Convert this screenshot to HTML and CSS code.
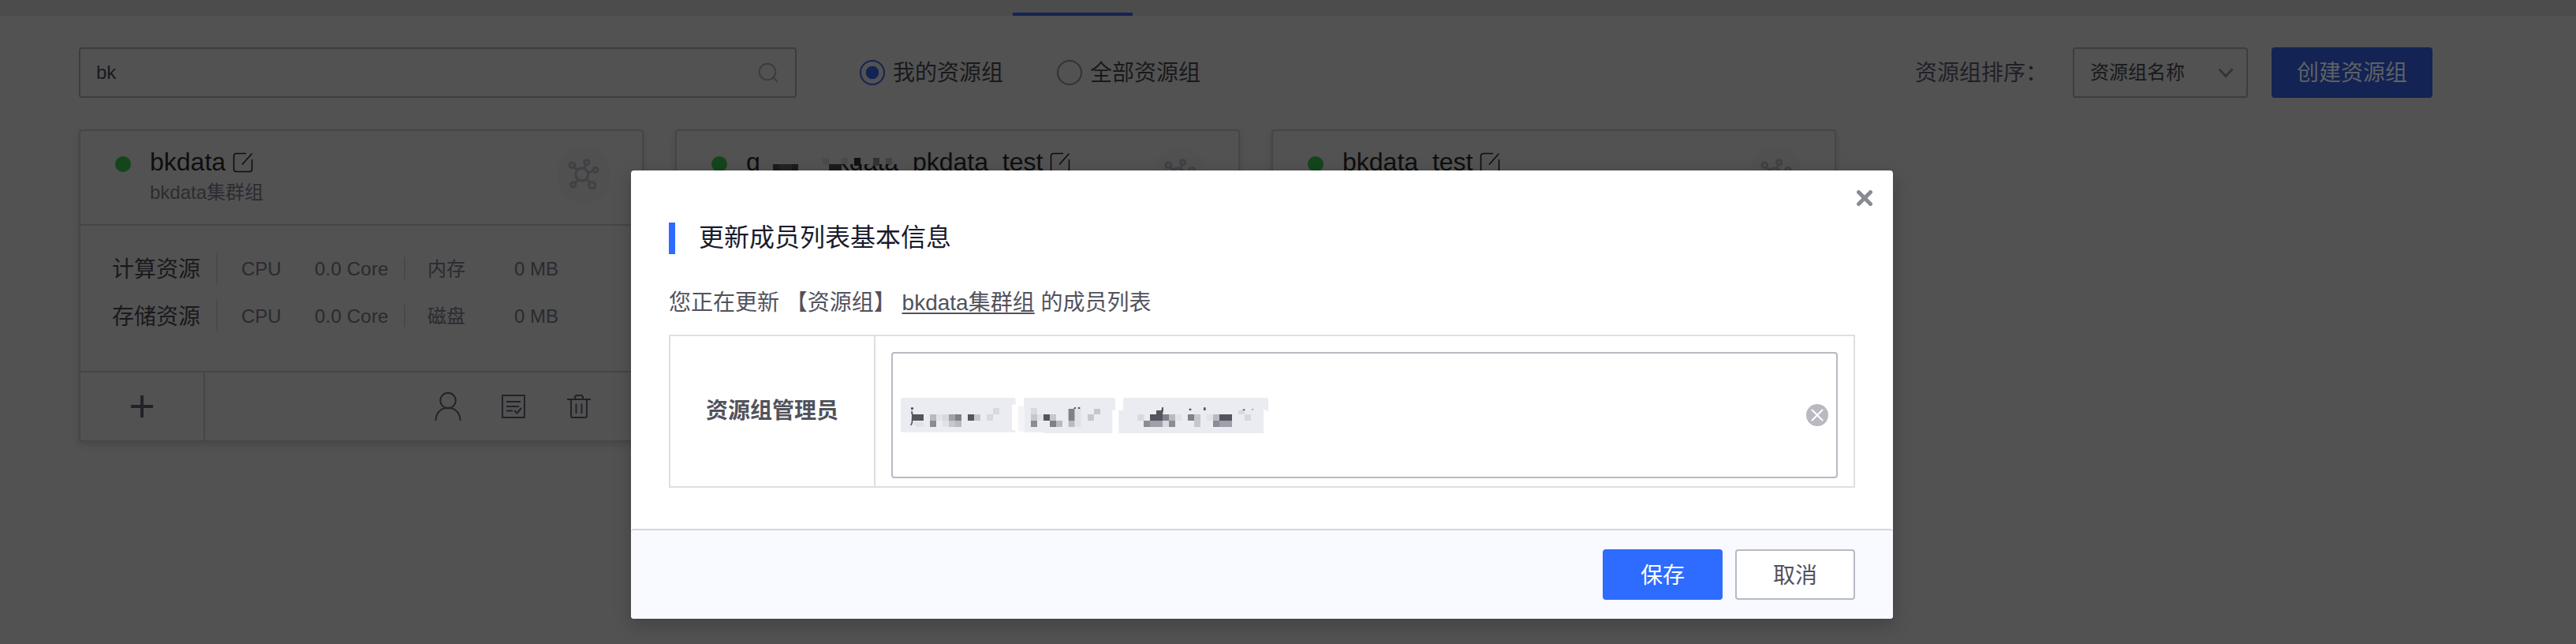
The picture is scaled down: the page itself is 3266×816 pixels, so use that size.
FILE: index.html
```html
<!DOCTYPE html>
<html lang="zh-CN">
<head>
<meta charset="utf-8">
<title>资源组</title>
<link rel="stylesheet" href="styles.css">
</head>
<body>
<svg class="defs" width="0" height="0">
  <symbol id="edit" viewBox="0 0 26 26"><path d="M17 1.5H4.500a3 3 0 0 0-3 3v17a3 3 0 0 0 3 3h17a3 3 0 0 0 3-3V9M24.500 1.500 12 15.500" fill="none" stroke="currentColor" stroke-width="1.600"/></symbol>
  <symbol id="net" viewBox="0 0 68 72"><ellipse cx="34" cy="36" rx="34" ry="36" fill="#505050"/><g fill="none" stroke="#414145" stroke-width="3"><circle cx="31.700" cy="35" r="8"/><circle cx="19.300" cy="23.300" r="3.300"/><circle cx="37.700" cy="19.700" r="3"/><circle cx="49" cy="29.300" r="3"/><circle cx="44.700" cy="48.700" r="4"/><circle cx="20.700" cy="48" r="3"/><path d="m22 26 4 3.500M36.500 23l-2 4.500M46 30.500l-7 2.500M42 45.500 37 41M23 46l4-4.500"/></g></symbol>
</svg>
<div class="topbar"><div class="tab-line"></div></div>
<div class="toolbar">
  <div class="search"><span>bk</span>
    <svg width="26" height="26" viewBox="0 0 26 26" fill="none" stroke="#3d3d40" stroke-width="2"><circle cx="12" cy="12" r="10.300"/><path d="m19.500 19 5 5.500"/></svg>
  </div>
  <label class="radio on"><i></i><span>我的资源组</span></label>
  <label class="radio"><i></i><span>全部资源组</span></label>
  <div class="sort"><span>资源组排序</span><span class="colon">：</span></div>
  <div class="select"><span>资源组名称</span>
    <svg width="20" height="13" viewBox="0 0 20 13" fill="none" stroke="#323236" stroke-width="2.600"><path d="m1.500 1.500 8.500 9 8.500-9"/></svg>
  </div>
  <div class="create">创建资源组</div>
</div>
<div class="cards">
  <div class="card">
    <div class="head"><i class="dot"></i>
      <div class="names"><div class="title"><span class="name">bkdata</span><svg class="edit"><use href="#edit"/></svg></div><div class="sub">bkdata集群组</div></div>
      <svg class="net"><use href="#net"/></svg></div>
    <div class="body">
      <div class="row"><b>计算资源</b><span class="k">CPU</span><span class="v">0.0 Core</span><span class="m">内存</span><span class="z">0 MB</span></div>
      <div class="row"><b>存储资源</b><span class="k">CPU</span><span class="v">0.0 Core</span><span class="m">磁盘</span><span class="z">0 MB</span></div>
    </div>
    <div class="foot">
      <div class="add"><svg width="28" height="28" viewBox="0 0 28 28" stroke="#22222a" stroke-width="4"><path d="M14 0v28M0 14h28"/></svg></div>
      <div class="ops">
        <svg width="34" height="38" viewBox="0 0 34 38" fill="none" stroke="#22222a" stroke-width="2"><circle cx="17" cy="11.500" r="9.700"/><path d="M1.500 37C1.500 27 8 20.700 17 20.700S32.500 27 32.500 37"/></svg>
        <svg width="30" height="30" viewBox="0 0 30 30" fill="none" stroke="#22222a" stroke-width="2"><rect x="1" y="1" width="28" height="28" rx=".5"/><path d="M6 9h18M6 15h16M6 20.500h8M16 20l3.500 3.500 5.500-6.500"/></svg>
        <svg width="30" height="30" viewBox="0 0 30 30" fill="none" stroke="#22222a" stroke-width="2"><path d="M0 6h30M10 6V3.500Q10 1 12.500 1h5Q20 1 20 3.500V6M5 6v21q0 2 2 2h16q2 0 2-2V6M11.500 11.500V24M18.500 11.500V24"/></svg>
      </div>
    </div>
  </div>
  <div class="card">
    <div class="head"><i class="dot"></i>
      <div class="names"><div class="title"><span class="name initial">g</span><span class="name">bkdata_bkdata_test</span><svg class="edit"><use href="#edit"/></svg>
        <svg class="mosaic" width="260" height="40" viewBox="940 180 260 40" shape-rendering="crispEdges"><path fill="#525252" d="M1040 184h99v24h-99zM1150 184h18v15h-18zM1040 208h14v8h-14z"/><path fill="#4b4b4b" d="M1043 200h8v8h-8zM1067 200h8v8h-8z"/><path fill="#121212" d="M1083 200h8v10h-8z"/><path fill="#333" d="M1107 200h8v10h-8z"/><path fill="#424242" d="M1123 200h8v8h-8z"/><path fill="#1b1b1c" d="M980 208h8v8h-8zM1004 208h8v8h-8zM1051 208h16v8h-16z"/><path fill="#232325" d="M988 208h16v8h-16z"/></svg></div></div>
      <svg class="net"><use href="#net"/></svg></div>
  </div>
  <div class="card">
    <div class="head"><i class="dot"></i>
      <div class="names"><div class="title"><span class="name">bkdata_test</span><svg class="edit"><use href="#edit"/></svg></div></div>
      <svg class="net"><use href="#net"/></svg></div>
  </div>
</div>
<div class="modal">
  <svg class="close" width="20" height="20" viewBox="0 0 20 20" stroke="#878b94" stroke-width="5" stroke-linecap="round"><path d="m2.500 2.500 15 15M17.500 2.500l-15 15"/></svg>
  <div class="content">
    <h1>更新成员列表基本信息</h1>
    <p>您正在更新 【资源组】 <u>bkdata集群组</u> 的成员列表</p>
    <div class="table">
      <div class="label">资源组管理员</div>
      <div class="cell"><div class="input">
        <svg width="466" height="45" viewBox="66 72 1398 135" preserveAspectRatio="none">
          <g fill="#ebecf1"><path d="M74 72h421q8 0 8 8v18h-14v96l14 2q0 7-8 7H74q-8 0-8-8V80q0-8 8-8zM542 72h332q8 0 8 8v40h-11v87H614l-10-4h-70V80q0-8 8-8zM920 72h536q8 0 8 8v44l-18-8v91H895v-87h17V80q0-8 8-8z"/></g>
          <path fill="#f4f4f8" d="m513 101 24 5v97l-24-4z"/>
          <g fill="#54545e"><path d="M108 135h45v24h-41q0 18-9 18v-5q4 0 4-12zM105 109h9v8h-9zM106 122h4l3 13h-7zM321 135h24v24h-24zM609 135h24v24h-24zM723 113l4-5h5v6zM740 108h8v7h-8zM1038 120h19l3-12h5v12l-3 15h24v24h-72v-24h24zM1163 113h8v7h-8zM1218 109h8v11h-8zM1278 135h48v24h-48zM1366 118l6-4 5 6h-10zM1400 120l5-6h3l-6 6z"/></g>
          <path fill="#7f8088" d="M273 135h24v24h-24zM633 159h24v24h-24zM704 114h24v45h-24zM1062 135h24v24h-24zM1158 135h24v24h-24z"/>
          <path fill="#8c8d94" d="M177 159h24v24h-24zM561 159h24v24h-24zM990 159h24v24h-24zM1086 159h24v24h-24zM1254 159h24v24h-24z"/>
          <path fill="#a0a0aa" d="M249 135h24v24h-24zM1014 159h48v24h-48zM1278 159h48v24h-48z"/>
          <path fill="#b9babf" d="M177 135h24v24h-24zM273 159h24v24h-24zM657 159h24v24h-24zM704 159h24v24h-24zM1086 135h24v24h-24zM1254 135h24v24h-24z"/>
          <path fill="#c6c6ce" d="M249 159h24v24h-24zM345 135h24v24h-24zM561 135h24v24h-24zM633 135h24v24h-24zM777 135h24v24h-24zM801 114h24v21h-24zM1182 135h24v24h-24zM1182 159h24v24h-24z"/>
          <path fill="#d8d9df" d="M225 135h24v24h-24zM417 111h24v24h-24zM393 135h24v24h-24zM561 111h24v24h-24zM967 135h24v24h-24zM1062 159h24v24h-24zM1350 120h24v15h-24zM1374 135h24v24h-24z"/>
          <path fill="#e1e2e7" d="M117 163h36v20h-24q-8-4-12-12zM201 135h24v24h-24zM225 159h24v24h-24zM585 135h24v24h-24zM728 114h24v69h-24zM1110 135h24v24h-24zM1230 135h24v24h-24z"/>
        </svg>
        <svg class="clear" width="28" height="28" viewBox="0 0 28 28"><circle cx="14" cy="14" r="14" fill="#b9b9c2"/><path d="m7.500 7.500 13 13M20.500 7.500l-13 13" stroke="#fff" stroke-width="2" stroke-linecap="round"/></svg>
      </div></div>
    </div>
  </div>
  <div class="footer"><div class="btn save">保存</div><div class="btn">取消</div></div>
</div>
</body>
</html>
```
FILE: styles.css
```css
* { box-sizing: border-box; }
body { margin: 0; width: 3266px; height: 816px; overflow: hidden; position: relative; background: #525252; color: #19191c; font: 28px/40px "Liberation Sans", "Noto Sans CJK SC", sans-serif; white-space: nowrap; }
svg { display: block; flex: none; }
.defs { position: absolute; }
.topbar { height: 20px; background: #4c4c4c; display: flex; align-items: flex-end; padding-left: 1284px; }
.tab-line { width: 152px; height: 4px; background: #132353; }
.toolbar { display: flex; align-items: center; height: 64px; margin: 40px 182px 0 100px; }
.search { display: flex; align-items: center; justify-content: space-between; width: 910px; height: 64px; margin-right: 80px; padding: 0 21px 0 20px; border: 2px solid #3d3d3d; border-radius: 4px; font-size: 24px; }
.radio { display: flex; align-items: center; gap: 10px; margin-right: 68px; }
.radio span, .sort { padding-top: 2px; }
.radio i { width: 32px; height: 32px; border: 2px solid #323237; border-radius: 50%; }
.radio.on i { border-color: #132353; background: radial-gradient(circle, #132353 8px, transparent 8.500px); }
.sort { display: flex; margin-left: auto; width: 200px; color: #202028; }
.colon { width: 28px; }
.select { display: flex; align-items: center; justify-content: space-between; width: 222px; height: 64px; margin-right: 30px; padding: 0 16px 0 20px; border: 2px solid #3d3d3d; border-radius: 4px; font-size: 24px; }
.create { width: 204px; height: 64px; border-radius: 4px; background: #132353; color: #5f6167; text-align: center; line-height: 66px; }
.cards { display: flex; gap: 40px; margin: 40px 0 0 100px; }
.card { width: 716px; height: 396px; border: 2px solid #45454a; border-radius: 4px; box-shadow: 0 4px 8px rgba(0, 0, 0, .12); }
.head { display: flex; height: 120px; padding: 20px 40px 0 44px; border-bottom: 2px solid #45454a; }
.dot { width: 20px; height: 20px; margin: 12px 24px 0 0; border-radius: 50%; background: #14451b; }
.names { flex: 1; }
.title { display: flex; align-items: center; position: relative; height: 40px; font-size: 32px; color: #0e0e0e; }
.name { padding-bottom: 3px; }
.initial { width: 97px; }
.edit { width: 26px; height: 26px; margin-left: 9px; }
.mosaic { position: absolute; left: -6px; top: -6px; }
.sub { padding-top: 2px; font-size: 24px; line-height: 32px; color: #2c2c31; }
.net { width: 68px; height: 72px; }
.body { height: 186px; padding: 34px 0 0 40px; border-bottom: 2px solid #45454a; }
.row { display: flex; align-items: center; height: 40px; margin-bottom: 20px; font-size: 24px; color: #2a2a30; }
.row b { width: 134px; height: 40px; line-height: 43px; border-right: 2px solid #494949; font-weight: 400; font-size: 28px; color: #19191c; }
.k { width: 93px; margin-left: 30px; }
.k, .m, .z { padding-top: 2px; }
.v { width: 115px; height: 28px; line-height: 30px; border-right: 2px solid #494949; letter-spacing: .2px; }
.m { width: 110px; margin-left: 28px; }
.foot { display: flex; height: 86px; }
.add { display: flex; align-items: center; justify-content: center; width: 158px; border-right: 2px solid #45454a; }
.ops { display: flex; align-items: center; flex: 1; justify-content: flex-end; gap: 53px; padding-right: 65px; }
.ops svg:first-child { margin-right: -2px; }
.modal { position: absolute; left: 800px; top: 216px; width: 1600px; height: 568px; border-radius: 4px; background: #fff; box-shadow: 0 8px 24px rgba(0, 0, 0, .2); color: #52525c; }
.close { position: absolute; left: 1554px; top: 25px; }
.content { height: 454px; padding: 66px 48px 0; }
h1 { margin: 0; padding-left: 30px; border-left: 8px solid #2d6cff; font-weight: 400; font-size: 32px; height: 40px; line-height: 38px; color: #1a1b2d; }
p { margin: 42px 0 20px; }
u { text-decoration-thickness: 2px; text-underline-offset: 3px; text-decoration-skip-ink: none; }
.table { display: flex; height: 194px; border: 2px solid #dfdfdf; }
.label { width: 260px; border-right: 2px solid #dfdfdf; text-align: center; font-weight: 700; line-height: 190px; }
.cell { flex: 1; padding: 20px; }
.input { display: flex; align-items: center; justify-content: space-between; height: 160px; padding: 0 10px; border: 2px solid #b9b9c2; border-radius: 4px; }
.footer { display: flex; justify-content: flex-end; gap: 16px; height: 114px; padding: 24px 48px; border-top: 2px solid #d5d5e0; border-radius: 4px; background: #f9faff; }
.btn { width: 152px; height: 64px; border: 2px solid #b9b9c2; border-radius: 4px; background: #fff; text-align: center; line-height: 63px; }
.save { border-color: #2d6cff; background: #2d6cff; color: #fff; }
```
